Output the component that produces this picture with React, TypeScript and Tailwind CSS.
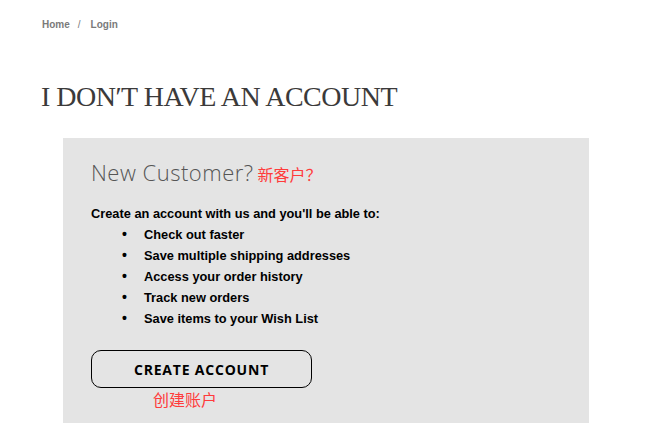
export default function App() {
  return (
    <div className="w-[650px] h-[434px] bg-white overflow-hidden relative">
      <div className="pl-[42px] pt-[25px] flex items-center text-[10px] font-bold text-[#7a7a7a] h-[14px] leading-[14px]" style={{ fontFamily: '"Liberation Sans", Arial, sans-serif' }}>
        <span>Home</span>
        <span className="ml-[8px] mr-[10px] font-normal">/</span>
        <span>Login</span>
      </div>
      <h1 className="ml-[41px] mt-[56px] text-[28px] leading-[32px] text-[#3b3a3a] tracking-[-0.5px]" style={{ fontFamily: '"Liberation Serif", "Times New Roman", serif' }}>
        I DON′T HAVE AN ACCOUNT
      </h1>
      <div className="ml-[63px] mt-[25px] w-[526px] h-[285px] bg-[#e4e4e4] pl-[28px] pt-[20px]">
        <div className="flex items-baseline">
          <span className="text-[22px] leading-[28px] text-[#555555] tracking-[0.5px]" style={{ fontFamily: '"Open Sans", sans-serif', fontWeight: 300 }}>New Customer?</span>
          <span className="ml-[4px] text-[16px] text-[#ff3b3b]" style={{ fontFamily: '"Noto Sans CJK SC", sans-serif' }}>新客户？</span>
        </div>
        <div className="mt-[17px] text-[12.8px] font-bold text-black leading-[21px]" style={{ fontFamily: '"Liberation Sans", Arial, sans-serif' }}>
          <div>Create an account with us and you'll be able to:</div>
          <ul className="pl-[31px]">
            {["Check out faster", "Save multiple shipping addresses", "Access your order history", "Track new orders", "Save items to your Wish List"].map((t) => (
              <li key={t} className="flex items-center">
                <span className="w-[22px] text-[14px]">•</span>
                <span>{t}</span>
              </li>
            ))}
          </ul>
        </div>
        <button className="mt-[21px] w-[221px] h-[38px] border border-black rounded-[10px] text-[14px] font-bold text-black tracking-[0.8px]" style={{ fontFamily: '"Open Sans", sans-serif' }}>
          CREATE ACCOUNT
        </button>
        <div className="ml-[62px] mt-0 text-[16px] leading-[22px] text-[#ff3b3b]" style={{ fontFamily: '"Noto Sans CJK SC", sans-serif' }}>创建账户</div>
      </div>
    </div>
  );
}
